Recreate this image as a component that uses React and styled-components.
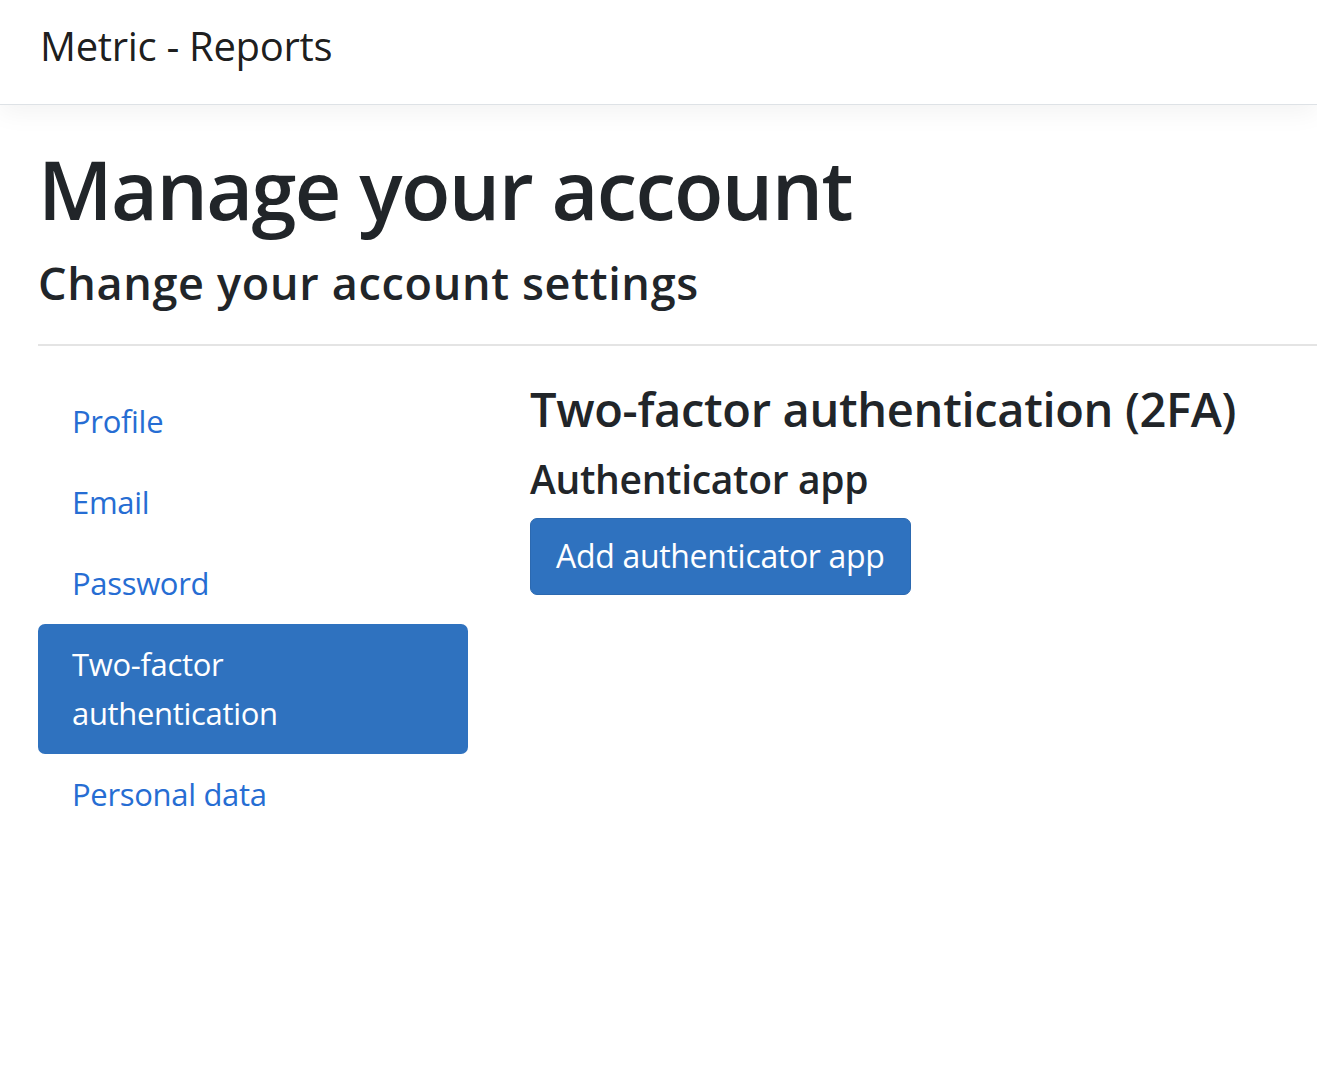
import React from "react";
import styled, { createGlobalStyle } from "styled-components";

const GlobalStyle = createGlobalStyle`
  * { box-sizing: border-box; }
  html, body { margin: 0; padding: 0; background: #fff; }
  body {
    font-family: "Open Sans", "Noto Sans", Arial, sans-serif;
    color: #212529;
    letter-spacing: -0.02em;
  }
`;

const Page = styled.div`
  min-height: 1089px;
  overflow: hidden;
`;

const Navbar = styled.header`
  height: 105px;
  padding: 16px 0 0 40px;
  border-bottom: 1px solid #dee2e6;
  box-shadow: 0 8px 24px rgba(0, 0, 0, 0.05);
  background: #fff;
`;

const Brand = styled.a`
  display: inline-block;
  font-size: 40px;
  line-height: 1.5;
  color: rgba(0, 0, 0, 0.9);
  text-decoration: none;
`;

const Container = styled.main`
  padding-left: 38px;
`;

const Title = styled.h1`
  margin: 35px 0 0;
  font-size: 81px;
  font-weight: 600;
  line-height: 1.2;
  letter-spacing: -0.02em;
`;

const Subtitle = styled.h2`
  margin: 19px 0 0;
  font-size: 45px;
  font-weight: 600;
  line-height: 1.2;
  letter-spacing: 0.015em;
`;

const Divider = styled.hr`
  margin: 34px 0 0;
  border: 0;
  border-top: 2px solid #e4e4e4;
`;

const Row = styled.div`
  display: flex;
  margin-top: 35px;
`;

const Sidebar = styled.nav`
  width: 430px;
  flex: none;
  display: flex;
  flex-direction: column;
`;

const NavLink = styled.a`
  display: block;
  padding: 16px 34px;
  font-size: 31px;
  line-height: 49px;
  border-radius: 7px;
  text-decoration: none;
  color: ${(p) => (p.$active ? "#fff" : "#266dd3")};
  background: ${(p) => (p.$active ? "#2f72bf" : "transparent")};
`;

const Content = styled.section`
  margin-left: 62px;
  flex: 1;
`;

const SectionTitle = styled.h3`
  margin: 0;
  font-size: 47px;
  font-weight: 600;
  line-height: 1.2;
  white-space: nowrap;
`;

const SubHeading = styled.h4`
  margin: 18px 0 0;
  font-size: 39px;
  font-weight: 600;
  line-height: 1.2;
`;

const PrimaryButton = styled.a`
  display: inline-block;
  margin-top: 16px;
  padding: 13px 25px 14px;
  font-size: 32px;
  line-height: 1.5;
  color: #fff;
  background: #2f72bf;
  border: 1px solid #2c69b0;
  border-radius: 7px;
  text-decoration: none;
`;

const navItems = [
  { label: "Profile" },
  { label: "Email" },
  { label: "Password" },
  { label: "Two-factor authentication", active: true },
  { label: "Personal data" },
];

export default function App() {
  return (
    <Page>
      <GlobalStyle />
      <Navbar>
        <Brand href="#">Metric - Reports</Brand>
      </Navbar>
      <Container>
        <Title>Manage your account</Title>
        <Subtitle>Change your account settings</Subtitle>
        <Divider />
        <Row>
          <Sidebar>
            {navItems.map((item) => (
              <NavLink key={item.label} href="#" $active={item.active}>
                {item.label === "Two-factor authentication" ? (
                  <>
                    Two-factor
                    <br />
                    authentication
                  </>
                ) : (
                  item.label
                )}
              </NavLink>
            ))}
          </Sidebar>
          <Content>
            <SectionTitle>Two-factor authentication (2FA)</SectionTitle>
            <SubHeading>Authenticator app</SubHeading>
            <PrimaryButton href="#">Add authenticator app</PrimaryButton>
          </Content>
        </Row>
      </Container>
    </Page>
  );
}
